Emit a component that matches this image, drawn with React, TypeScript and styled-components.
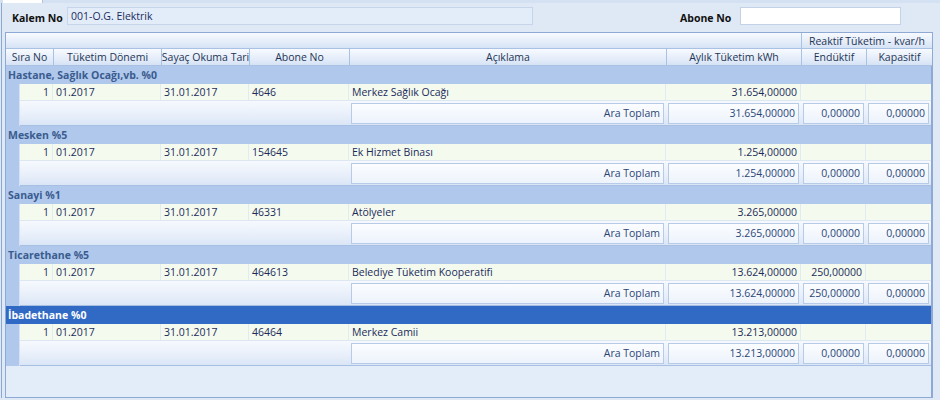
import React from "react";
import styled, { createGlobalStyle } from "styled-components";

const GlobalStyle = createGlobalStyle`
  html, body {
    margin: 0;
    padding: 0;
    background: #dfe9f6;
  }
  * {
    box-sizing: border-box;
  }
`;

const COLS = [48, 108, 88, 100, 317, 135, 65, 65];
const INDENT = 15;

interface Group {
  title: string;
  abone: string;
  aciklama: string;
  aylik: string;
  enduktif: string;
  totEnduktif: string;
  selected?: boolean;
}

const groups: Group[] = [
  { title: "Hastane, Sağlık Ocağı,vb. %0", abone: "4646", aciklama: "Merkez Sağlık Ocağı", aylik: "31.654,00000", enduktif: "", totEnduktif: "0,00000" },
  { title: "Mesken %5", abone: "154645", aciklama: "Ek Hizmet Binası", aylik: "1.254,00000", enduktif: "", totEnduktif: "0,00000" },
  { title: "Sanayi %1", abone: "46331", aciklama: "Atölyeler", aylik: "3.265,00000", enduktif: "", totEnduktif: "0,00000" },
  { title: "Ticarethane %5", abone: "464613", aciklama: "Belediye Tüketim Kooperatifi", aylik: "13.624,00000", enduktif: "250,00000", totEnduktif: "250,00000" },
  { title: "İbadethane %0", abone: "46464", aciklama: "Merkez Camii", aylik: "13.213,00000", enduktif: "", totEnduktif: "0,00000", selected: true },
];

const Screen = styled.div`
  width: 940px;
  height: 400px;
  overflow: hidden;
  background: #dfe9f6;
  font-family: "Open Sans", "Noto Sans", sans-serif;
  font-size: 10.5px;
  color: #1c2b5c;
`;

const TabStrip = styled.div`
  height: 3px;
  display: flex;
  background: #d3e1f3;
`;

const Tab = styled.div`
  width: 40px;
  margin-left: 3px;
  background: #ffffff;
  border-right: 1px solid #b3c3da;
`;

const Panel = styled.div`
  margin-left: 1px;
  border-left: 1px solid #8ba8d2;
  padding-left: 3px;
  display: flex;
  flex-direction: column;
`;

const FormRow = styled.div`
  height: 29px;
  display: flex;
  align-items: flex-start;
  padding-top: 4px;
  padding-left: 7px;
`;

const Label = styled.span`
  font-weight: bold;
  color: #111;
  line-height: 17px;
  margin-top: 3px;
  width: ${(p: { w: number }) => p.w}px;
`;

const TextBox = styled.div<{ w: number; white?: boolean }>`
  width: ${(p) => p.w}px;
  height: 18px;
  padding: 0 3px;
  line-height: 16px;
  color: #1c2b5c;
  background: ${(p) => (p.white ? "#ffffff" : "#e3edfa")};
  border: 1px solid ${(p) => (p.white ? "#c3d2e7" : "#c6d5ea")};
`;

const Spacer = styled.div`
  flex: 1;
`;

const Grid = styled.div`
  width: 928px;
  height: 366px;
  border: 1px solid #8eaad4;
  border-right-width: 2px;
  background: #e3edfa;
  display: flex;
  flex-direction: column;
`;

const HeadRow = styled.div<{ h: number }>`
  display: flex;
  height: ${(p) => p.h}px;
  flex-shrink: 0;
`;

const HeadCell = styled.div<{ w: number }>`
  width: ${(p) => p.w}px;
  flex-shrink: 0;
  display: flex;
  align-items: center;
  justify-content: center;
  white-space: nowrap;
  overflow: hidden;
  color: #1f3556;
  background: linear-gradient(#f7faff, #e6eefa 55%, #d6e3f5);
  border-right: 1px solid #a9c1e2;
  border-bottom: 1px solid #a9c1e2;
  &:last-child {
    border-right: none;
  }
`;

const GroupHeader = styled.div<{ selected?: boolean }>`
  height: 18px;
  flex-shrink: 0;
  padding-left: 2px;
  display: flex;
  align-items: center;
  font-weight: bold;
  color: ${(p) => (p.selected ? "#ffffff" : "#3a5c8f")};
  background: ${(p) => (p.selected ? "#316ac5" : "#b0c8ec")};
`;

const GroupBody = styled.div`
  display: flex;
  flex-shrink: 0;
`;

const Indent = styled.div`
  width: ${INDENT}px;
  background: #b0c8ec;
  border-right: 1px solid #d5e2f4;
`;

const Rows = styled.div`
  flex: 1;
  display: flex;
  flex-direction: column;
`;

const DataRow = styled.div`
  height: 17px;
  display: flex;
  background: #f4faee;
  border-bottom: 1px solid #dde7f2;
`;

const DataCell = styled.div<{ w: number; right?: boolean }>`
  width: ${(p) => p.w}px;
  flex-shrink: 0;
  padding: 0 3px;
  line-height: 16px;
  white-space: nowrap;
  overflow: hidden;
  text-align: ${(p) => (p.right ? "right" : "left")};
  border-right: 1px solid #e2eaf3;
  &:last-child {
    border-right: none;
  }
`;

const FooterRow = styled.div`
  height: 25px;
  display: flex;
  align-items: center;
  background: linear-gradient(#f6f9fe, #e8effa 60%, #dae5f6);
  border-bottom: 1px solid #a6bfe3;
`;

const FooterGap = styled.div<{ w: number }>`
  width: ${(p) => p.w}px;
  flex-shrink: 0;
`;

const FooterBox = styled.div<{ w: number }>`
  width: ${(p) => p.w - 4}px;
  margin: 0 2px;
  flex-shrink: 0;
  height: 21px;
  padding: 0 3px;
  line-height: 19px;
  text-align: right;
  color: #2c4677;
  white-space: nowrap;
  background: linear-gradient(#fbfdff, #edf3fc);
  border: 1px solid #b7cbe8;
`;

const GroupBlock: React.FC<{ g: Group }> = ({ g }) => (
  <>
    <GroupHeader selected={g.selected}>{g.title}</GroupHeader>
    <GroupBody>
      <Indent />
      <Rows>
        <DataRow>
          <DataCell w={COLS[0] - INDENT} right>1</DataCell>
          <DataCell w={COLS[1]}>01.2017</DataCell>
          <DataCell w={COLS[2]}>31.01.2017</DataCell>
          <DataCell w={COLS[3]}>{g.abone}</DataCell>
          <DataCell w={COLS[4]}>{g.aciklama}</DataCell>
          <DataCell w={COLS[5]} right>{g.aylik}</DataCell>
          <DataCell w={COLS[6]} right>{g.enduktif}</DataCell>
          <DataCell w={COLS[7]} right></DataCell>
        </DataRow>
        <FooterRow>
          <FooterGap w={COLS[0] - INDENT + COLS[1] + COLS[2] + COLS[3]} />
          <FooterBox w={COLS[4]}>Ara Toplam</FooterBox>
          <FooterBox w={COLS[5]}>{g.aylik}</FooterBox>
          <FooterBox w={COLS[6]}>{g.totEnduktif}</FooterBox>
          <FooterBox w={COLS[7]}>0,00000</FooterBox>
        </FooterRow>
      </Rows>
    </GroupBody>
  </>
);

const headers = [
  "Sıra No",
  "Tüketim Dönemi",
  "Sayaç Okuma Tari",
  "Abone No",
  "Açıklama",
  "Aylık Tüketim kWh",
  "Endüktif",
  "Kapasitif",
];

const App: React.FC = () => {
  const bandWidth = COLS.slice(0, 6).reduce((a, b) => a + b, 0);
  return (
    <Screen>
      <GlobalStyle />
      <TabStrip>
        <Tab />
      </TabStrip>
      <Panel>
        <FormRow>
          <Label w={55}>Kalem No</Label>
          <TextBox w={466}>001-O.G. Elektrik</TextBox>
          <Spacer />
          <Label w={60}>Abone No</Label>
          <TextBox w={161} white />
          <Spacer style={{ flex: "0 0 39px" }} />
        </FormRow>
        <Grid>
          <HeadRow h={16}>
            <HeadCell w={bandWidth} />
            <HeadCell w={COLS[6] + COLS[7]}>Reaktif Tüketim - kvar/h</HeadCell>
          </HeadRow>
          <HeadRow h={17}>
            {headers.map((h, i) => (
              <HeadCell key={h} w={COLS[i]}>
                {h}
              </HeadCell>
            ))}
          </HeadRow>
          {groups.map((g) => (
            <GroupBlock key={g.title} g={g} />
          ))}
        </Grid>
      </Panel>
    </Screen>
  );
};

export default App;
